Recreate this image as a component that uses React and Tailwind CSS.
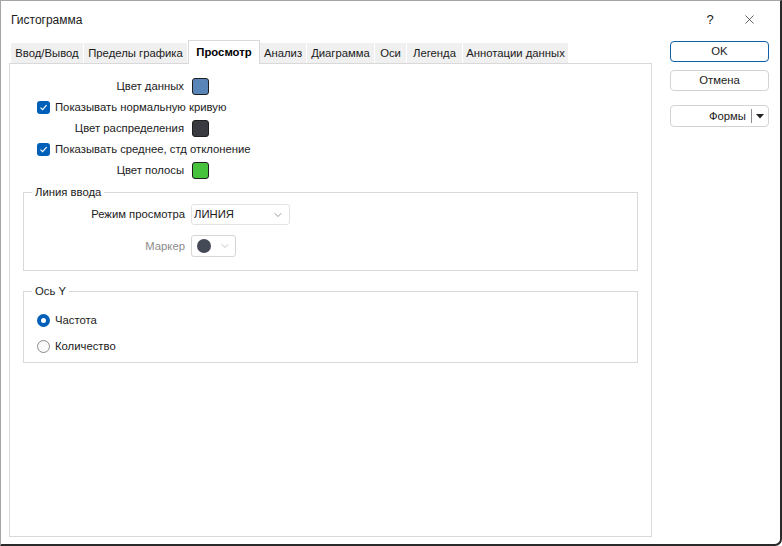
import { ChevronDown, X } from 'lucide-react';

const tabs = [
  { label: 'Ввод/Вывод', w: 'w-[73px]' },
  { label: 'Пределы графика', w: 'w-[104px]' },
  { label: 'Просмотр', w: 'w-[72px]', active: true },
  { label: 'Анализ', w: 'w-[47px]' },
  { label: 'Диаграмма', w: 'w-[68px]' },
  { label: 'Оси', w: 'w-[32px]' },
  { label: 'Легенда', w: 'w-[56px]' },
  { label: 'Аннотации данных', w: 'w-[106px]' },
];

const Swatch = ({ color }) => (
  <span className={`block w-[17px] h-[17px] rounded-[3px] border border-[#1f1f1f] ${color}`}></span>
);

const Checkbox = () => (
  <span className="flex items-center justify-center w-[13px] h-[13px] rounded-[3px] bg-[#005fb8]">
    <svg width="9" height="9" viewBox="0 0 9 9" fill="none">
      <path d="M1.5 4.6 L3.6 6.6 L7.6 2.2" stroke="white" strokeWidth="1.2" />
    </svg>
  </span>
);

const Radio = ({ checked }) =>
  checked ? (
    <span className="flex items-center justify-center w-[13px] h-[13px] rounded-full bg-[#005fb8]">
      <span className="w-[5px] h-[5px] rounded-full bg-white"></span>
    </span>
  ) : (
    <span className="block w-[13px] h-[13px] rounded-full border border-[#8a8a8a] bg-[#fafafa]"></span>
  );

const ColorRow = ({ label, color }) => (
  <div className="flex items-center h-[21px]">
    <span className="w-[182px] pr-[8px] text-right">{label}</span>
    <Swatch color={color} />
  </div>
);

const CheckRow = ({ label }) => (
  <div className="flex items-center h-[21px] pl-[27px] gap-[5px]">
    <Checkbox />
    <span>{label}</span>
  </div>
);

const App = () => {
  return (
    <div
      className="w-[782px] h-[546px] flex flex-col bg-white text-[11.3px] text-[#1b1b1b] border-t border-l border-[#a5a5a5] border-r-2 border-b-2 border-r-[#2a2a2a] border-b-[#2a2a2a] rounded-br-[7px] overflow-hidden whitespace-nowrap"
      style={{ fontFamily: '"Liberation Sans", Arial, sans-serif' }}
    >
      <div className="flex items-center h-[37px] pl-[10px] shrink-0">
        <span className="flex-1 text-[12px]">Гистограмма</span>
        <span className="w-[12px] text-center text-[13px] mr-[26px]">?</span>
        <X size={15} strokeWidth={1.1} className="mr-[23px]" />
      </div>

      <div className="flex flex-1">
        <div className="flex flex-col ml-[8px] w-[643px] pb-[7px]">
          <div className="flex items-end h-[25px] pl-[2px]">
            {tabs.map(t =>
              t.active ? (
                <div
                  key={t.label}
                  className={`${t.w} h-[24px] -mb-px relative z-10 flex items-center justify-center bg-white border border-b-0 border-[#d9d9d9] font-bold text-black`}
                >
                  {t.label}
                </div>
              ) : (
                <div
                  key={t.label}
                  className={`${t.w} h-[20px] flex items-center justify-center bg-[#f0f0f0] border-r border-white text-[#1b1b1b]`}
                >
                  {t.label}
                </div>
              )
            )}
          </div>

          <div className="flex-1 border border-[#d9d9d9] pt-[12px]">
            <ColorRow label="Цвет данных" color="bg-[#5a85b8]" />
            <CheckRow label="Показывать нормальную кривую" />
            <ColorRow label="Цвет распределения" color="bg-[#3a3b40]" />
            <CheckRow label="Показывать среднее, стд отклонение" />
            <ColorRow label="Цвет полосы" color="bg-[#46c23c]" />

            <fieldset className="mx-[13px] mt-[3px] h-[87px] border border-[#d9d9d9]">
              <legend className="ml-[8px] px-[3px] leading-[16px]">Линия ввода</legend>
              <div className="flex items-center h-[21px] mt-[4px]">
                <span className="w-[167px] pr-[6px] text-right">Режим просмотра</span>
                <div className="flex items-center justify-between w-[99px] h-[21px] border border-[#e3e3e3] rounded-[3px] pl-[2px] pr-[5px]">
                  <span>ЛИНИЯ</span>
                  <ChevronDown size={12} strokeWidth={1.2} className="text-[#555]" />
                </div>
              </div>
              <div className="flex items-center h-[22px] mt-[10px]">
                <span className="w-[167px] pr-[6px] text-right text-[#8c8c8c]">Маркер</span>
                <div className="flex items-center justify-between w-[45px] h-[22px] border border-[#d6d6d6] rounded-[3px] pl-[5px] pr-[4px]">
                  <span className="w-[14px] h-[14px] rounded-full bg-[#454a57]"></span>
                  <ChevronDown size={12} strokeWidth={1.2} className="text-[#a0a0a0]" />
                </div>
              </div>
            </fieldset>

            <fieldset className="mx-[13px] mt-[12px] h-[80px] border border-[#d9d9d9]">
              <legend className="ml-[8px] px-[3px] leading-[16px]">Ось Y</legend>
              <div className="flex items-center h-[20px] pl-[13px] gap-[5px] mt-[11px]">
                <Radio checked />
                <span>Частота</span>
              </div>
              <div className="flex items-center h-[20px] pl-[13px] gap-[5px] mt-[6px]">
                <Radio />
                <span>Количество</span>
              </div>
            </fieldset>
          </div>
        </div>

        <div className="flex flex-col pl-[18px] pt-[3px]">
          <button className="w-[99px] h-[21px] rounded-[4px] border border-[#0f5fa6] bg-white">OK</button>
          <button className="w-[99px] h-[21px] mt-[8px] rounded-[4px] border border-[#d3d3d3] bg-white">Отмена</button>
          <div className="flex items-center w-[99px] h-[22px] mt-[14px] rounded-[4px] border border-[#d3d3d3] bg-white">
            <span className="flex-1 text-right pr-[5px]">Формы</span>
            <span className="w-px h-[14px] bg-[#8a8a8a]"></span>
            <span className="w-[16px] flex justify-center">
              <svg width="8" height="5" viewBox="0 0 8 5">
                <path d="M0 0 H8 L4 4.5 Z" fill="#222" />
              </svg>
            </span>
          </div>
        </div>
      </div>
    </div>
  );
};

export default App;
